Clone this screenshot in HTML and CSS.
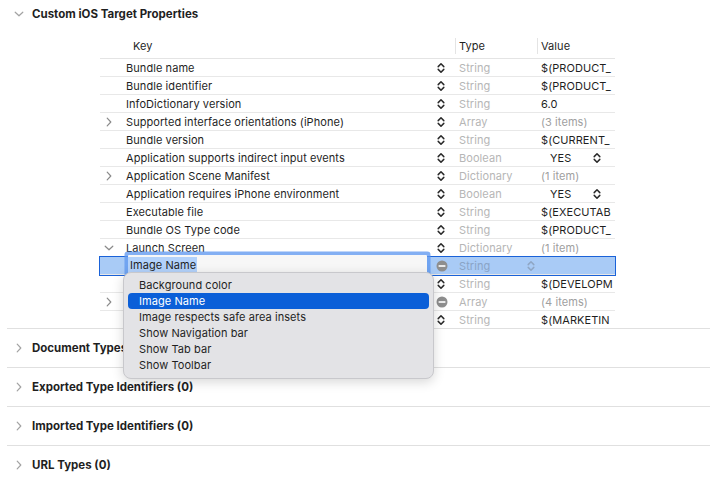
FILE: index.html
```html
<!DOCTYPE html>
<html>
<head>
<meta charset="utf-8">
<link rel="stylesheet" href="styles.css">
</head>
<body>
<svg width="0" height="0" class="defs">
  <defs>
    <symbol id="stepper" viewBox="0 0 8 12"><path d="M1.2 4.6 L4 1.8 L6.8 4.6 M1.2 7.4 L4 10.2 L6.8 7.4" fill="none" stroke="currentColor" stroke-width="1.5" stroke-linecap="round" stroke-linejoin="round"/></symbol>
    <symbol id="minus" viewBox="0 0 12 12"><circle cx="6" cy="6" r="5.5" fill="currentColor"/><rect x="2.6" y="5.2" width="6.8" height="1.6" fill="#fff"/></symbol>
    <symbol id="chev-r" viewBox="0 0 6 10"><path d="M1.2 1.2 L4.8 5 L1.2 8.8" fill="none" stroke="currentColor" stroke-width="1.2" stroke-linecap="round" stroke-linejoin="round"/></symbol>
    <symbol id="chev-d" viewBox="0 0 10 6"><path d="M1.2 1.2 L5 4.8 L8.8 1.2" fill="none" stroke="currentColor" stroke-width="1.2" stroke-linecap="round" stroke-linejoin="round"/></symbol>
  </defs>
</svg>
<div class="page">
  <section class="sec">
    <div class="sec-head"><svg class="sec-chev-d"><use href="#chev-d"/></svg>Custom iOS Target Properties</div>
    <div class="table">
      <div class="thead">
        <div class="th th-key">Key</div>
        <div class="th th-type"><span>Type</span></div>
        <div class="th th-val"><span>Value</span></div>
      </div>

      <div class="row"><div class="disc"></div><div class="key">Bundle name</div><div class="ctl"><svg class="step"><use href="#stepper"/></svg></div><div class="type">String</div><div class="val">$(PRODUCT_</div></div>
      <div class="row"><div class="disc"></div><div class="key">Bundle identifier</div><div class="ctl"><svg class="step"><use href="#stepper"/></svg></div><div class="type">String</div><div class="val">$(PRODUCT_</div></div>
      <div class="row"><div class="disc"></div><div class="key">InfoDictionary version</div><div class="ctl"><svg class="step"><use href="#stepper"/></svg></div><div class="type">String</div><div class="val">6.0</div></div>
      <div class="row"><div class="disc"><svg class="chev-r"><use href="#chev-r"/></svg></div><div class="key">Supported interface orientations (iPhone)</div><div class="ctl"><svg class="step"><use href="#stepper"/></svg></div><div class="type">Array</div><div class="val muted">(3 items)</div></div>
      <div class="row"><div class="disc"></div><div class="key">Bundle version</div><div class="ctl"><svg class="step"><use href="#stepper"/></svg></div><div class="type">String</div><div class="val">$(CURRENT_</div></div>
      <div class="row"><div class="disc"></div><div class="key">Application supports indirect input events</div><div class="ctl"><svg class="step"><use href="#stepper"/></svg></div><div class="type">Boolean</div><div class="val bool"><span>YES</span><svg class="step"><use href="#stepper"/></svg></div></div>
      <div class="row"><div class="disc"><svg class="chev-r"><use href="#chev-r"/></svg></div><div class="key">Application Scene Manifest</div><div class="ctl"><svg class="step"><use href="#stepper"/></svg></div><div class="type">Dictionary</div><div class="val muted">(1 item)</div></div>
      <div class="row"><div class="disc"></div><div class="key">Application requires iPhone environment</div><div class="ctl"><svg class="step"><use href="#stepper"/></svg></div><div class="type">Boolean</div><div class="val bool"><span>YES</span><svg class="step"><use href="#stepper"/></svg></div></div>
      <div class="row"><div class="disc"></div><div class="key">Executable file</div><div class="ctl"><svg class="step"><use href="#stepper"/></svg></div><div class="type">String</div><div class="val">$(EXECUTAB</div></div>
      <div class="row"><div class="disc"></div><div class="key">Bundle OS Type code</div><div class="ctl"><svg class="step"><use href="#stepper"/></svg></div><div class="type">String</div><div class="val">$(PRODUCT_</div></div>
      <div class="row"><div class="disc"><svg class="chev-d"><use href="#chev-d"/></svg></div><div class="key">Launch Screen</div><div class="ctl"><svg class="step"><use href="#stepper"/></svg></div><div class="type">Dictionary</div><div class="val muted">(1 item)</div></div>

      <div class="row sel">
        <div class="sel-key">
          <div class="field"><span class="hl">Image Name</span></div>
        </div>
        <div class="ctl"><svg class="minus"><use href="#minus"/></svg></div>
        <div class="type type-sel"><span>String</span><svg class="step faint"><use href="#stepper"/></svg></div>
        <div class="val"></div>
        <div class="popup">
          <div class="item">Background color</div>
          <div class="item on">Image Name</div>
          <div class="item">Image respects safe area insets</div>
          <div class="item">Show Navigation bar</div>
          <div class="item">Show Tab bar</div>
          <div class="item">Show Toolbar</div>
        </div>
      </div>

      <div class="row"><div class="disc"></div><div class="key"></div><div class="ctl"><svg class="step"><use href="#stepper"/></svg></div><div class="type">String</div><div class="val">$(DEVELOPM</div></div>
      <div class="row"><div class="disc"><svg class="chev-r"><use href="#chev-r"/></svg></div><div class="key"></div><div class="ctl"><svg class="minus"><use href="#minus"/></svg></div><div class="type">Array</div><div class="val muted">(4 items)</div></div>
      <div class="row last"><div class="disc"></div><div class="key"></div><div class="ctl"><svg class="step"><use href="#stepper"/></svg></div><div class="type">String</div><div class="val">$(MARKETIN</div></div>
    </div>
  </section>

  <section class="sec closed"><div class="sec-head"><svg class="sec-chev-r"><use href="#chev-r"/></svg><span class="cut">Document Types</span></div></section>
  <section class="sec closed"><div class="sec-head"><svg class="sec-chev-r"><use href="#chev-r"/></svg>Exported Type Identifiers (0)</div></section>
  <section class="sec closed"><div class="sec-head"><svg class="sec-chev-r"><use href="#chev-r"/></svg>Imported Type Identifiers (0)</div></section>
  <section class="sec closed noline"><div class="sec-head"><svg class="sec-chev-r"><use href="#chev-r"/></svg>URL Types (0)</div></section>
</div>
</body>
</html>
```

FILE: styles.css
```css
html, body {
  margin: 0;
  padding: 0;
  background: #ffffff;
}
body {
  font-family: Inter, "Noto Sans", "Liberation Sans", sans-serif;
  font-size: 11px;
  letter-spacing: 0.07px;
  color: #1f1f1f;
  overflow: hidden;
}
.defs {
  position: absolute;
  width: 0;
  height: 0;
}
.page {
  width: 728px;
}
.sec {
  margin: 0 18px 0 7px;
  border-bottom: 1px solid #e0e0e0;
}
.sec.noline {
  border-bottom: none;
}
.sec-head {
  height: 27px;
  display: flex;
  align-items: center;
  padding-left: 25px;
  font-weight: 700;
  font-size: 11.5px;
  letter-spacing: 0;
  color: #1f1f1f;
  position: relative;
}
.sec.closed .sec-head {
  height: 38px;
}
.sec-chev-d {
  position: absolute;
  left: 7px;
  top: 11px;
  width: 10px;
  height: 6px;
  color: #a3a3a3;
}
.sec-chev-r {
  position: absolute;
  left: 9px;
  top: 14px;
  width: 6px;
  height: 10px;
  color: #a3a3a3;
}

.table {
  margin-left: 93px;
  width: 515px;
}
.thead {
  display: flex;
  height: 31px;
  align-items: flex-end;
  border-bottom: 1px solid #e4e4e4;
}
.th {
  height: 16px;
  margin-bottom: 4px;
  display: flex;
  align-items: center;
}
.th-key {
  width: 355px;
  padding-left: 33px;
  box-sizing: border-box;
}
.th-type {
  width: 82px;
  border-left: 1px solid #e4e4e4;
  padding-left: 3px;
  box-sizing: border-box;
}
.th-val {
  width: 78px;
  border-left: 1px solid #e4e4e4;
  padding-left: 3px;
  box-sizing: border-box;
}

.row {
  display: flex;
  height: 17px;
  border-bottom: 1px solid #e8e8e8;
  align-items: center;
  position: relative;
}
.row.last {
  border-bottom: none;
}
.disc {
  width: 26px;
  height: 17px;
  flex: none;
  position: relative;
  color: #8a8a8a;
}
.chev-r {
  position: absolute;
  left: 6px;
  top: 4px;
  width: 6px;
  height: 10px;
}
.chev-d {
  position: absolute;
  left: 4px;
  top: 6px;
  width: 10px;
  height: 6px;
}
.key {
  width: 307px;
  flex: none;
  white-space: nowrap;
  overflow: hidden;
}
.ctl {
  width: 22px;
  flex: none;
  display: flex;
  align-items: center;
  padding-left: 4px;
  box-sizing: border-box;
  height: 17px;
}
.step {
  width: 8px;
  height: 12px;
  color: #2a2a2a;
  flex: none;
}
.step.faint {
  color: #8fa6c4;
}
.minus {
  width: 12px;
  height: 12px;
  color: #8e8e8e;
  margin-left: -1px;
}
.type {
  width: 82px;
  flex: none;
  padding-left: 4px;
  box-sizing: border-box;
  color: #b6b6b6;
  white-space: nowrap;
}
.val {
  width: 78px;
  flex: none;
  padding-left: 4px;
  box-sizing: border-box;
  white-space: nowrap;
  overflow: hidden;
  color: #1f1f1f;
}
.val.muted {
  color: #a0a0a0;
}
.val.bool {
  display: flex;
  align-items: center;
  padding-left: 13px;
}
.val.bool span {
  width: 43px;
}

.row.sel {
  background: #a9cbf6;
  outline: 1px solid #1a62d8;
  outline-offset: 0;
  z-index: 2;
}
.sel-key {
  width: 333px;
  flex: none;
  height: 17px;
  position: relative;
}
.field {
  position: absolute;
  left: 28px;
  top: -2px;
  width: 299px;
  height: 19px;
  background: #f7f7f7;
  box-shadow: 0 0 0 3.5px rgba(96, 152, 240, 0.78);
  border-radius: 1px;
  display: flex;
  align-items: center;
  padding-left: 0;
  box-sizing: border-box;
}
.hl {
  background: #b3d2fb;
  padding: 1px 1px 1px 2px;
}
.type-sel {
  display: flex;
  align-items: center;
  color: #8aa4c6;
}
.type-sel span {
  width: 68px;
}

.popup {
  position: absolute;
  left: 23px;
  top: 15px;
  width: 311px;
  height: 107px;
  box-sizing: border-box;
  background: #e3e3e6;
  border: 1px solid #c8c8cc;
  border-radius: 8px;
  box-shadow: 0 3px 12px rgba(0, 0, 0, 0.16);
  padding: 4px 4px;
  z-index: 5;
}
.item {
  height: 16px;
  display: flex;
  align-items: center;
  padding-left: 11px;
  border-radius: 4px;
  color: #1f1f1f;
}
.item.on {
  background: #0b5fd8;
  color: #ffffff;
}
```
